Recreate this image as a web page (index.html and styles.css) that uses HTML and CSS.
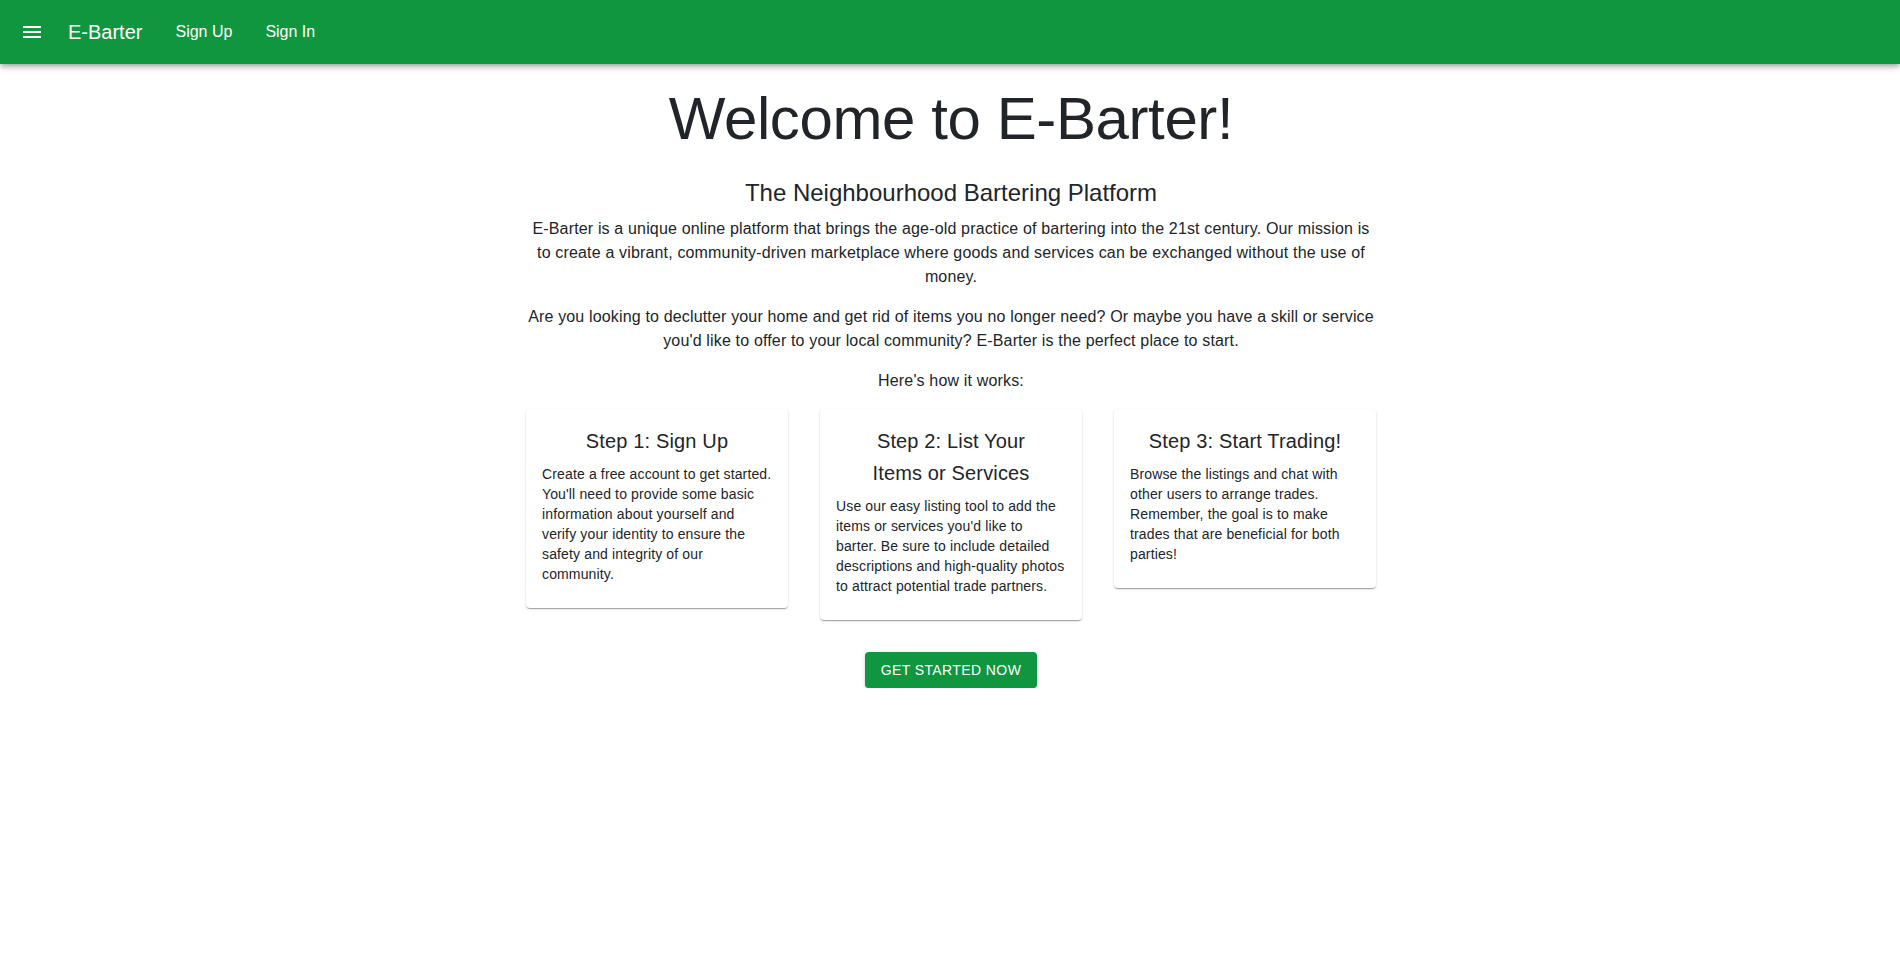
FILE: index.html
```html
<!DOCTYPE html>
<html lang="en">
<head>
<meta charset="utf-8">
<title>E-Barter</title>
<link rel="stylesheet" href="styles.css">
</head>
<body>
<header class="appbar">
  <div class="toolbar">
    <button class="icon-btn" aria-label="menu">
      <svg viewBox="0 0 24 24" width="24" height="24"><path fill="#fff" d="M3 18h18v-2H3v2zm0-5h18v-2H3v2zm0-7v2h18V6H3z"/></svg>
    </button>
    <div class="brand">E-Barter</div>
    <nav class="nav">
      <a class="nav-btn" href="#">Sign Up</a>
      <a class="nav-btn" href="#">Sign In</a>
    </nav>
  </div>
</header>
<main class="container">
  <h1 class="title">Welcome to E-Barter!</h1>
  <h2 class="subtitle">The Neighbourhood Bartering Platform</h2>
  <p class="body">E-Barter is a unique online platform that brings the age-old practice of bartering into the 21st century. Our mission is to create a vibrant, community-driven marketplace where goods and services can be exchanged without the use of money.</p>
  <p class="body">Are you looking to declutter your home and get rid of items you no longer need? Or maybe you have a skill or service you'd like to offer to your local community? E-Barter is the perfect place to start.</p>
  <p class="body">Here's how it works:</p>
  <div class="cards">
    <div class="card">
      <h3 class="card-title">Step 1: Sign Up</h3>
      <p class="card-text">Create a free account to get started. You'll need to provide some basic information about yourself and verify your identity to ensure the safety and integrity of our community.</p>
    </div>
    <div class="card">
      <h3 class="card-title">Step 2: List Your Items or Services</h3>
      <p class="card-text">Use our easy listing tool to add the items or services you'd like to barter. Be sure to include detailed descriptions and high-quality photos to attract potential trade partners.</p>
    </div>
    <div class="card">
      <h3 class="card-title">Step 3: Start Trading!</h3>
      <p class="card-text">Browse the listings and chat with other users to arrange trades. Remember, the goal is to make trades that are beneficial for both parties!</p>
    </div>
  </div>
  <div class="cta-row">
    <a class="cta" href="#">Get Started Now</a>
  </div>
</main>
</body>
</html>
```
FILE: styles.css
```css
* { box-sizing: border-box; }
html, body { margin: 0; padding: 0; }
body {
  font-family: "Liberation Sans", Arial, sans-serif;
  color: #212529;
  background: #fff;
}
.appbar {
  background: #10963f;
  color: #fff;
  box-shadow: 0px 2px 4px -1px rgba(0,0,0,0.2), 0px 4px 5px 0px rgba(0,0,0,0.14), 0px 1px 10px 0px rgba(0,0,0,0.12);
  position: relative;
  z-index: 2;
}
.toolbar {
  height: 64px;
  display: flex;
  align-items: center;
  padding: 0 24px;
}
.icon-btn {
  width: 40px;
  height: 40px;
  padding: 8px;
  margin-left: -12px;
  margin-right: 16px;
  border: 0;
  background: transparent;
  display: flex;
  align-items: center;
  justify-content: center;
  cursor: pointer;
}
.icon-btn svg { display: block; }
.brand {
  font-size: 20px;
  line-height: 32px;
  margin-right: 25px;
}
.nav { display: flex; gap: 17px; }
.nav-btn {
  color: #fff;
  text-decoration: none;
  font-size: 16px;
  line-height: 24px;
  padding: 6px 8px;
}
.container {
  max-width: 900px;
  margin: 0 auto;
  padding: 0 24px 0 26px;
  text-align: center;
}
.title {
  font-size: 60px;
  font-weight: 400;
  line-height: 72px;
  letter-spacing: -0.4px;
  margin: 19px 0 22px;
}
.subtitle {
  font-size: 24px;
  font-weight: 400;
  line-height: 32px;
  margin: 0 0 8px;
}
.body {
  font-size: 16px;
  line-height: 24px;
  letter-spacing: 0.16px;
  margin: 0 0 16px;
}
.cards {
  display: flex;
  gap: 32px;
  align-items: flex-start;
  margin-top: 16px;
}
.card {
  flex: 1 1 0;
  background: #fff;
  border-radius: 4px;
  box-shadow: 0px 2px 1px -1px rgba(0,0,0,0.2), 0px 1px 1px 0px rgba(0,0,0,0.14), 0px 1px 3px 0px rgba(0,0,0,0.12);
  padding: 16px 16px 24px;
}
.card-title {
  font-size: 20px;
  font-weight: 400;
  line-height: 32px;
  letter-spacing: 0.15px;
  padding: 0 16px;
  margin: 0 0 7px;
}
.card-text {
  font-size: 14px;
  line-height: 20px;
  letter-spacing: 0.14px;
  text-align: left;
  margin: 0;
}
.cta-row {
  display: flex;
  justify-content: center;
  margin-top: 32px;
}
.cta {
  background: #10963f;
  color: #fff;
  text-decoration: none;
  text-transform: uppercase;
  font-size: 14px;
  letter-spacing: 0.4px;
  line-height: 24px;
  padding: 6px 16px;
  border-radius: 4px;
  box-shadow: 0px 3px 1px -2px rgba(0,0,0,0.2), 0px 2px 2px 0px rgba(0,0,0,0.14), 0px 1px 5px 0px rgba(0,0,0,0.12);
}
```
